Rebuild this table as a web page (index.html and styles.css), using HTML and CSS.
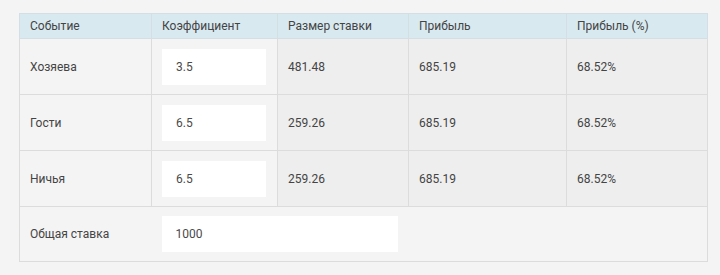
FILE: index.html
```html
<!DOCTYPE html>
<html lang="ru">
<head>
<meta charset="utf-8">
<link rel="stylesheet" href="styles.css">
</head>
<body>
<div class="wrap">
<table class="calc">
  <colgroup>
    <col class="c1"><col class="c2"><col class="c3"><col class="c4"><col class="c5">
  </colgroup>
  <thead>
    <tr>
      <th>Событие</th><th>Коэффициент</th><th>Размер ставки</th><th>Прибыль</th><th>Прибыль (%)</th>
    </tr>
  </thead>
  <tbody>
    <tr>
      <td class="light">Хозяева</td>
      <td class="light"><input class="field" value="3.5"></td>
      <td>481.48</td><td>685.19</td><td>68.52%</td>
    </tr>
    <tr>
      <td class="light">Гости</td>
      <td class="light"><input class="field" value="6.5"></td>
      <td>259.26</td><td>685.19</td><td>68.52%</td>
    </tr>
    <tr>
      <td class="light">Ничья</td>
      <td class="light"><input class="field" value="6.5"></td>
      <td>259.26</td><td>685.19</td><td>68.52%</td>
    </tr>
    <tr class="total">
      <td class="light">Общая ставка</td>
      <td class="light" colspan="4"><input class="field wide" value="1000"></td>
    </tr>
  </tbody>
</table>
</div>
</body>
</html>
```

FILE: styles.css
```css
html, body {
  margin: 0;
  padding: 0;
  background: #f4f4f4;
}
.wrap {
  padding: 13px 13px 0 19px;
}
.calc {
  border-collapse: collapse;
  table-layout: fixed;
  width: 688px;
  font-family: Roboto, "Liberation Sans", sans-serif;
  font-size: 12px;
  color: #444;
  border: 1px solid #dcdcdc;
}
.c1 { width: 132px; }
.c2 { width: 126px; }
.c3 { width: 131px; }
.c4 { width: 158px; }
.c5 { width: 141px; }
.calc th {
  background: #d9e9f0;
  font-weight: 400;
  text-align: left;
  height: 24px;
  padding: 0 0 0 10px;
  border: 1px solid #d3dfe4;
  color: #444;
}
.calc td {
  background: #eeeeee;
  height: 55px;
  padding: 0 0 0 10px;
  border: 1px solid #dcdcdc;
}
.calc td.light {
  background: #f4f4f4;
}
.total td {
  height: 54px;
  border-left: none;
  border-right: none;
}
.total td:first-child {
  border-left: 1px solid #dcdcdc;
}
.total td:last-child {
  border-right: 1px solid #dcdcdc;
}
.field {
  box-sizing: border-box;
  width: 104px;
  height: 36px;
  border: none;
  background: #fff;
  padding: 0 0 0 14px;
  font-family: Roboto, "Liberation Sans", sans-serif;
  font-size: 12px;
  color: #4a4a4a;
  display: block;
  outline: none;
}
.field.wide {
  width: 236px;
}
```
